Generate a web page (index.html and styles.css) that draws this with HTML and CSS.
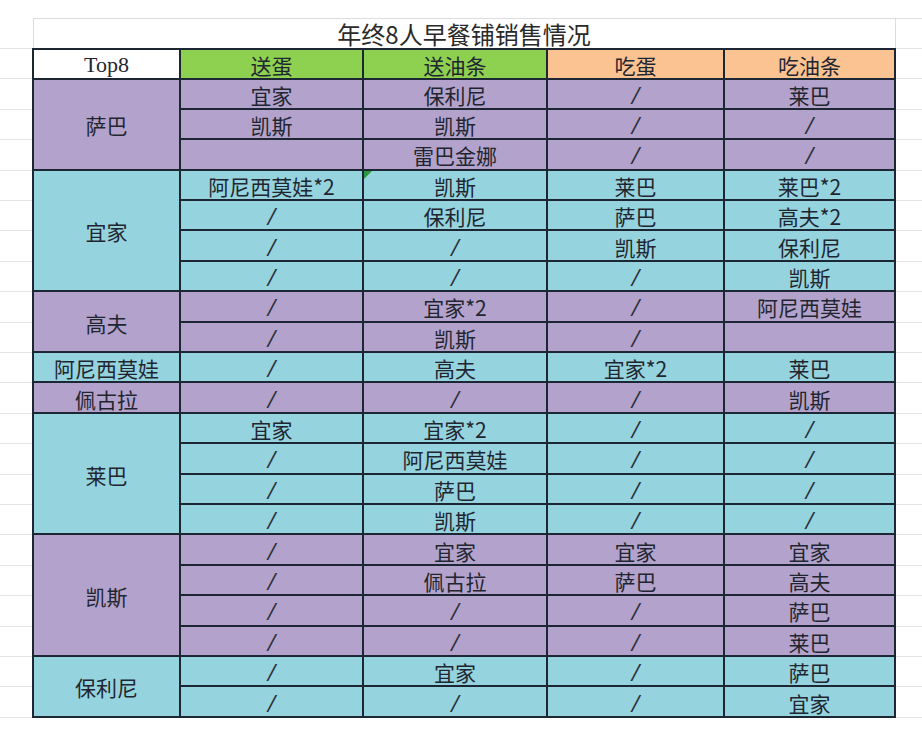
FILE: index.html
```html
<!DOCTYPE html>
<html lang="zh-CN">
<head>
<meta charset="utf-8">
<title>年终8人早餐铺销售情况</title>
<link rel="stylesheet" href="styles.css">
</head>
<body>
<div class="sheet">
  <table class="report">
    <colgroup>
      <col class="c-name"><col class="c-a"><col class="c-b"><col class="c-c"><col class="c-d">
    </colgroup>
    <tr class="r-title"><td class="title" colspan="5">年终8人早餐铺销售情况</td></tr>
    <tr class="r-head">
      <td class="h-top">Top8</td>
      <td class="h-green">送蛋</td>
      <td class="h-green">送油条</td>
      <td class="h-orange">吃蛋</td>
      <td class="h-orange">吃油条</td>
    </tr>

    <tr class="d p"><td class="name" rowspan="3">萨巴</td><td>宜家</td><td>保利尼</td><td class="sl">/</td><td>莱巴</td></tr>
    <tr class="d p"><td>凯斯</td><td>凯斯</td><td class="sl">/</td><td class="sl">/</td></tr>
    <tr class="d p"><td></td><td>雷巴金娜</td><td class="sl">/</td><td class="sl">/</td></tr>

    <tr class="d c"><td class="name" rowspan="4">宜家</td><td>阿尼西莫娃*2</td><td class="flag"><span class="tri"></span>凯斯</td><td>莱巴</td><td>莱巴*2</td></tr>
    <tr class="d c"><td class="sl">/</td><td>保利尼</td><td>萨巴</td><td>高夫*2</td></tr>
    <tr class="d c"><td class="sl">/</td><td class="sl">/</td><td>凯斯</td><td>保利尼</td></tr>
    <tr class="d c"><td class="sl">/</td><td class="sl">/</td><td class="sl">/</td><td>凯斯</td></tr>

    <tr class="d p"><td class="name" rowspan="2">高夫</td><td class="sl">/</td><td>宜家*2</td><td class="sl">/</td><td>阿尼西莫娃</td></tr>
    <tr class="d p"><td class="sl">/</td><td>凯斯</td><td class="sl">/</td><td></td></tr>

    <tr class="d c"><td class="name">阿尼西莫娃</td><td class="sl">/</td><td>高夫</td><td>宜家*2</td><td>莱巴</td></tr>

    <tr class="d p"><td class="name">佩古拉</td><td class="sl">/</td><td class="sl">/</td><td class="sl">/</td><td>凯斯</td></tr>

    <tr class="d c"><td class="name" rowspan="4">莱巴</td><td>宜家</td><td>宜家*2</td><td class="sl">/</td><td class="sl">/</td></tr>
    <tr class="d c"><td class="sl">/</td><td>阿尼西莫娃</td><td class="sl">/</td><td class="sl">/</td></tr>
    <tr class="d c"><td class="sl">/</td><td>萨巴</td><td class="sl">/</td><td class="sl">/</td></tr>
    <tr class="d c"><td class="sl">/</td><td>凯斯</td><td class="sl">/</td><td class="sl">/</td></tr>

    <tr class="d p"><td class="name" rowspan="4">凯斯</td><td class="sl">/</td><td>宜家</td><td>宜家</td><td>宜家</td></tr>
    <tr class="d p"><td class="sl">/</td><td>佩古拉</td><td>萨巴</td><td>高夫</td></tr>
    <tr class="d p"><td class="sl">/</td><td class="sl">/</td><td class="sl">/</td><td>萨巴</td></tr>
    <tr class="d p"><td class="sl">/</td><td class="sl">/</td><td class="sl">/</td><td>莱巴</td></tr>

    <tr class="d c"><td class="name" rowspan="2">保利尼</td><td class="sl">/</td><td>宜家</td><td class="sl">/</td><td>萨巴</td></tr>
    <tr class="d c"><td class="sl">/</td><td class="sl">/</td><td class="sl">/</td><td>宜家</td></tr>
  </table>
</div>
</body>
</html>
```

FILE: styles.css
```css
html, body {
  margin: 0;
  padding: 0;
  background: #ffffff;
}

.sheet {
  width: 922px;
  height: 733px;
  padding: 18px 0 0 32px;
  box-sizing: border-box;
  background-color: #ffffff;
  background-image:
    linear-gradient(#e2e2e2, #e2e2e2),
    repeating-linear-gradient(to bottom, #e4e4e4 0, #e4e4e4 1px, transparent 1px, transparent 30.4px);
  background-size: 28px 1px, 100% 670px;
  background-position: 894px 18px, 0 47.6px;
  background-repeat: no-repeat, no-repeat;
  font-family: "Noto Sans CJK SC", "Noto Sans", sans-serif;
  color: #1f2630;
}

.report {
  border-collapse: collapse;
  table-layout: fixed;
  width: 862px;
}

.c-name { width: 147px; }
.c-a { width: 183px; }
.c-b { width: 184px; }
.c-c { width: 177px; }
.c-d { width: 171px; }

.report td {
  padding: 2px 0 0;
  text-align: center;
  vertical-align: middle;
  font-size: 21px;
  font-weight: 400;
  line-height: 26px;
  border: 2px solid #1c2733;
  white-space: nowrap;
}

.r-title { height: 30px; }
.report td.title {
  border: 1px solid #dcdcdc;
  border-bottom: 2px solid #1c2733;
  background: #ffffff;
  font-size: 24px;
  line-height: 26px;
  padding: 2px 0 0;
  color: #2a2a2a;
}

.r-head { height: 30px; }
.report td.h-top {
  background: #ffffff;
  font-family: "Liberation Serif", serif;
  font-size: 22px;
}
.report td.h-green {
  background: #8ed151;
}
.report td.h-orange {
  background: #fbc292;
}

.d { height: 30.4px; }
.p td { background: #b3a2cb; }
.c td { background: #95d3de; }

.report td.sl {
  font-family: "Liberation Serif", serif;
  font-style: italic;
  font-weight: 700;
  font-size: 26px;
  line-height: 25px;
  padding-top: 3px;
  color: #2a3038;
}

.report td.flag {
  position: relative;
}
.tri {
  position: absolute;
  left: 0;
  top: 0;
  width: 0;
  height: 0;
  border-top: 8px solid #2a9a3c;
  border-right: 8px solid transparent;
}
```
